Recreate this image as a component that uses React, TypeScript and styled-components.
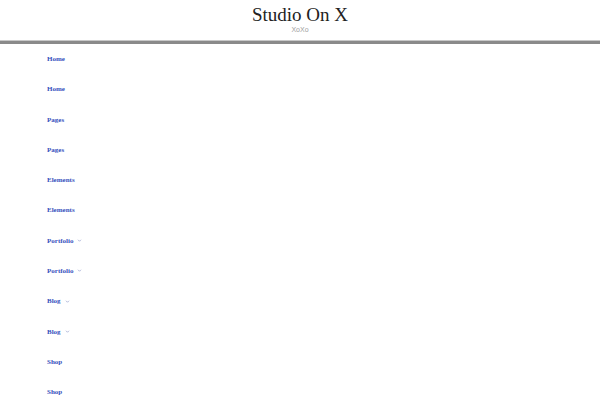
import React from 'react';
import styled, {createGlobalStyle} from 'styled-components';

const Global = createGlobalStyle`
  html, body {
    margin: 0;
    padding: 0;
    background: #fff;
  }
`;

const Page = styled.div`
  width: 600px;
  height: 400px;
  overflow: hidden;
`;

const Header = styled.header`
  display: flex;
  flex-direction: column;
  align-items: center;
  padding-top: 5px;
  height: 35px;
  border-bottom: 1px solid #c8c8c8;
`;

const Title = styled.h1`
  margin: 0;
  font-family: 'Liberation Serif', serif;
  font-weight: 400;
  font-size: 19px;
  line-height: 20px;
  color: #222;
`;

const Tagline = styled.div`
  font-family: 'Liberation Sans', sans-serif;
  font-size: 7px;
  line-height: 9px;
  color: #a0a0a0;
`;

const Rule = styled.div`
  height: 3px;
  background: #8a8a8a;
`;

const Menu = styled.nav`
  display: flex;
  flex-direction: column;
  padding-left: 47px;
`;

const Item = styled.a`
  display: flex;
  align-items: center;
  gap: 4px;
  height: 30.27px;
  flex-shrink: 0;
  font-family: 'Liberation Serif', serif;
  font-weight: 700;
  font-size: 7px;
  color: #3550bd;
  text-decoration: none;
`;

const Caret = styled.svg`
  width: 5px;
  height: 5px;
  stroke: #8a93c8;
  fill: none;
`;

const items: {label: string; sub?: boolean}[] = [
  {label: 'Home'},
  {label: 'Home'},
  {label: 'Pages'},
  {label: 'Pages'},
  {label: 'Elements'},
  {label: 'Elements'},
  {label: 'Portfolio', sub: true},
  {label: 'Portfolio', sub: true},
  {label: 'Blog', sub: true},
  {label: 'Blog', sub: true},
  {label: 'Shop'},
  {label: 'Shop'},
];

export default function App(): JSX.Element {
  return (
    <Page>
      <Global />
      <Header>
        <Title>Studio On X</Title>
        <Tagline>XoXo</Tagline>
      </Header>
      <Rule />
      <Menu>
        {items.map((it, i) => (
          <Item key={i} href="#">
            {it.label}
            {it.sub && (
              <Caret viewBox="0 0 10 10">
                <path d="M2 3.5 L5 6.5 L8 3.5" strokeWidth="1.3" />
              </Caret>
            )}
          </Item>
        ))}
      </Menu>
    </Page>
  );
}
